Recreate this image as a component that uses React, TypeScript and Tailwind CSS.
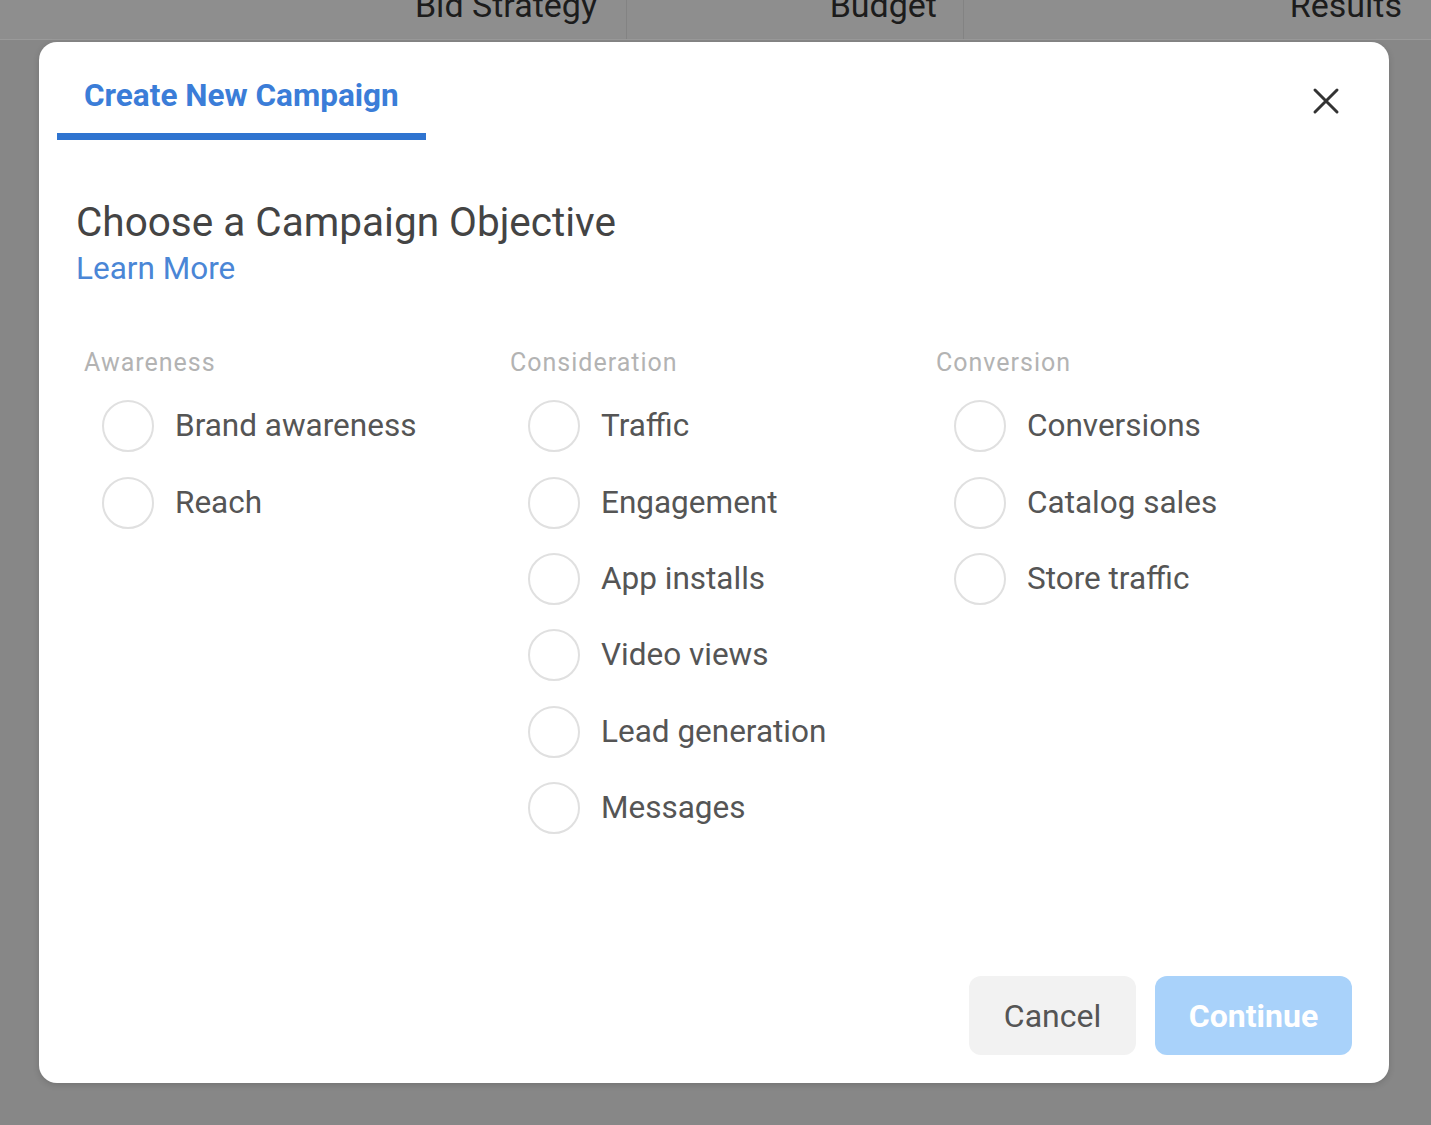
const groups = [
  { title: "Awareness", items: ["Brand awareness", "Reach"] },
  {
    title: "Consideration",
    items: ["Traffic", "Engagement", "App installs", "Video views", "Lead generation", "Messages"],
  },
  { title: "Conversion", items: ["Conversions", "Catalog sales", "Store traffic"] },
];

function Radio({ label }: { label: string }) {
  return (
    <label className="flex h-[76.4px] items-center pl-[18px] cursor-pointer">
      <span className="h-[52px] w-[52px] shrink-0 rounded-full border-2 border-[#e0e0e0] bg-white" />
      <span className="ml-[21px] text-[31.5px] leading-[36px] text-[#555]">{label}</span>
    </label>
  );
}

export default function App() {
  return (
    <div
      className="flex h-[1125px] flex-col overflow-hidden bg-[#878787]"
      style={{ fontFamily: "Roboto, 'Noto Sans', sans-serif" }}
    >
      {/* table header behind the overlay */}
      <div className="flex h-[40px] shrink-0 overflow-hidden border-b border-[#9a9a9a] bg-[#8e8e8e] text-[34px] leading-[34px] text-[#1c1c1c]">
        <div className="w-[626px] -mt-[12px] pr-[29px] text-right">Bid Strategy</div>
        <div className="w-[337px] -mt-[12px] border-l border-[#838383] pr-[26px] text-right">Budget</div>
        <div className="flex-1 -mt-[12px] border-l border-[#838383] pr-[29px] text-right">Results</div>
      </div>

      <div className="pl-[39px] pr-[42px] pt-[2px]">
        <div className="flex h-[1041px] flex-col rounded-[18px] bg-white shadow-[0_2px_6px_rgba(0,0,0,0.15)]">
          {/* Tab bar */}
          <div className="flex items-start justify-between">
            <div className="ml-[18px] w-[369px] pt-[34px]">
              <div className="h-[42px] pl-[27px] text-[31.5px] font-bold leading-[40px] text-[#3b7dd8]">
                Create New Campaign
              </div>
              <div className="mt-[15px] h-[7px] bg-[#2f74d0]" />
            </div>
            <button className="mr-[49px] mt-[45px] flex h-[28px] w-[28px] items-center justify-center text-[#333]">
              <svg width="28" height="28" viewBox="0 0 28 28" fill="none" stroke="currentColor" strokeWidth="3" strokeLinecap="round">
                <path d="M3 3 L25 25 M25 3 L3 25" />
              </svg>
            </button>
          </div>

          {/* Heading */}
          <div className="pl-[37px]">
            <div className="mt-[60px] text-[40.5px] leading-[44px] text-[#444]">Choose a Campaign Objective</div>
            <div className="mt-[7px] text-[31.5px] leading-[36px] text-[#4a86d6]">Learn More</div>
          </div>

          {/* Objectives */}
          <div className="mt-[61px] flex pl-[45px]">
            {groups.map((g) => (
              <div key={g.title} className="w-[426px]">
                <div className="text-[25px] leading-[30px] tracking-[1px] text-[#b3b3b3]">{g.title}</div>
                <div className="mt-[10px] flex flex-col">
                  {g.items.map((it) => (
                    <Radio key={it} label={it} />
                  ))}
                </div>
              </div>
            ))}
          </div>

          {/* Footer */}
          <div className="mt-auto flex justify-end gap-[19px] pb-[28px] pr-[37px]">
            <button className="h-[79px] w-[167px] rounded-[12px] bg-[#f2f2f2] text-[32px] text-[#555]">Cancel</button>
            <button className="h-[79px] w-[197px] rounded-[12px] bg-[#a9d2fa] text-[32px] font-bold text-white">Continue</button>
          </div>
        </div>
      </div>
    </div>
  );
}
